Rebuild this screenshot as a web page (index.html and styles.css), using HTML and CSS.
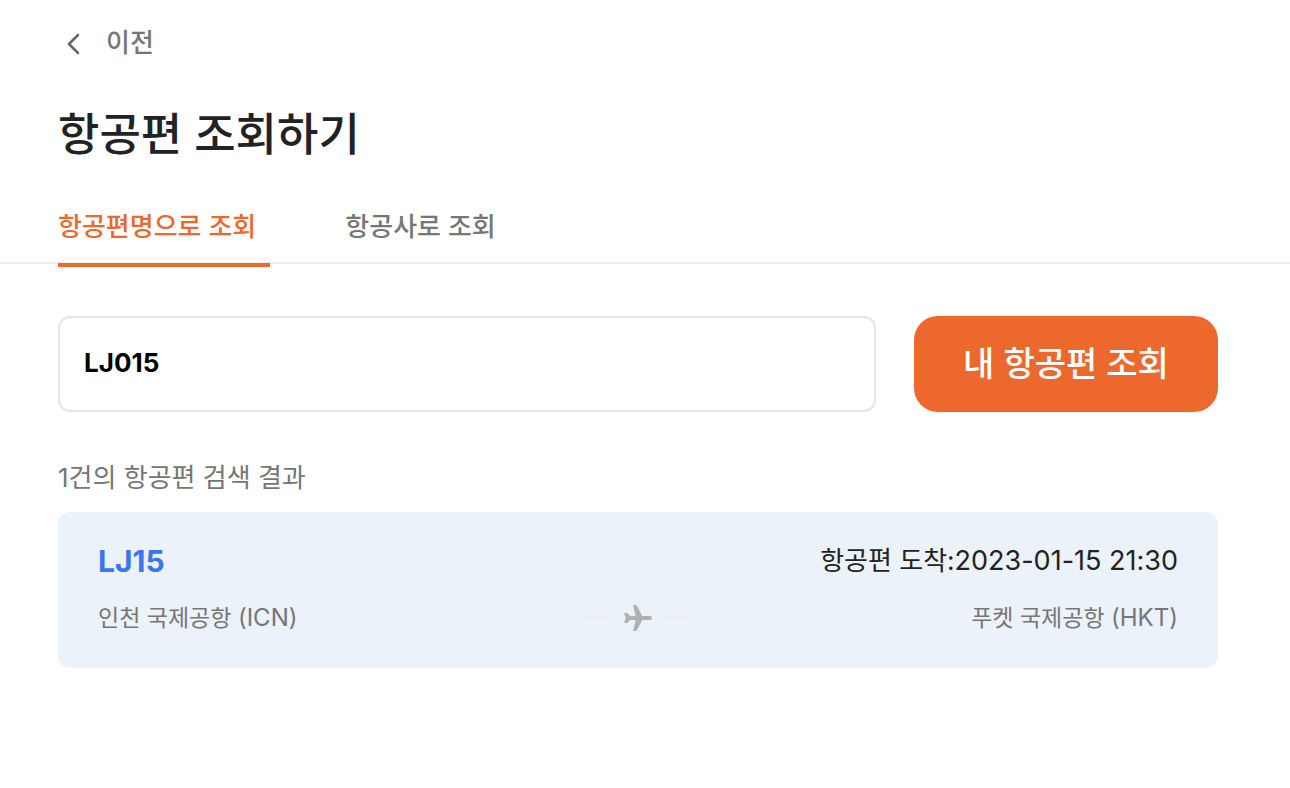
FILE: index.html
```html
<!DOCTYPE html>
<html lang="ko">
<head>
<meta charset="utf-8">
<meta name="viewport" content="width=device-width, initial-scale=1">
<title>항공편 조회하기</title>
<link rel="stylesheet" href="styles.css">
</head>
<body>
<header class="header">
  <a class="back" href="#">
    <svg class="back-icon" viewBox="0 0 32 32" aria-hidden="true"><path d="M20 8l-9 9 9 9"/></svg>
    <span>이전</span>
  </a>
  <h1 class="title">항공편 조회하기</h1>
</header>
<nav class="tabs">
  <a class="tab tab-active" href="#" aria-current="page">항공편명으로 조회</a>
  <a class="tab" href="#">항공사로 조회</a>
</nav>
<main class="content">
  <form class="search">
    <input class="search-input" type="text" value="LJ015" aria-label="항공편명">
    <button class="search-button" type="button">내 항공편 조회</button>
  </form>
  <p class="summary">1건의 항공편 검색 결과</p>
  <article class="flight">
    <div class="flight-top">
      <h2 class="flight-code">LJ15</h2>
      <p class="arrival">항공편 도착:<time class="arrival-time" datetime="2023-01-15T21:30">2023-01-15 21:30</time></p>
    </div>
    <div class="route">
      <span>인천 국제공항 <span class="airport-code">(ICN)</span></span>
      <div class="route-mark">
        <i class="route-line"></i>
        <svg class="plane" viewBox="0 0 28 26" aria-hidden="true"><path d="M9 0h2.600q1 0 1.500.9L18.200 11H26a2 2 0 0 1 0 4h-7.800L13.100 25.100q-.5.900-1.500.9H9l2.600-11H6l-2.500 3H0l1.700-5L0 8h3.500L6 11h5.600z"/></svg>
        <i class="route-line"></i>
      </div>
      <span class="route-to">푸켓 국제공항 <span class="airport-code">(HKT)</span></span>
    </div>
  </article>
</main>
</body>
</html>
```
FILE: styles.css
```css
* {
  box-sizing: border-box;
}

body {
  margin: 0;
  background: #fff;
  color: #222;
  font-family: Inter, "Noto Sans CJK KR", sans-serif;
}

h1, h2, p {
  margin: 0;
}

a {
  color: inherit;
  text-decoration: none;
}

.header {
  padding: 23px 72px 0 58px;
}

.back {
  display: inline-flex;
  align-items: center;
  gap: 16px;
  color: #767676;
  font-size: 26px;
  font-weight: 500;
  line-height: 40px;
}

.back-icon {
  width: 32px;
  height: 32px;
  fill: none;
  stroke: #666;
  stroke-width: 2.6;
  stroke-linecap: round;
  stroke-linejoin: round;
}

.title {
  margin-top: 36px;
  font-size: 45px;
  font-weight: 500;
  line-height: 72px;
}

.tabs {
  display: flex;
  gap: 75px;
  margin-top: 36px;
  padding: 0 58px;
  border-bottom: 2px solid #ededed;
}

.tab {
  margin-bottom: -5px;
  padding: 0 14px 16px 0;
  border-bottom: 4px solid transparent;
  color: #767676;
  font-size: 26px;
  font-weight: 500;
  line-height: 40px;
}

.tab-active {
  border-color: #ec682c;
  color: #ec682c;
}

.content {
  padding: 52px 72px 60px 58px;
}

.search {
  display: flex;
  gap: 38px;
}

.search-input {
  flex: 1;
  min-width: 0;
  height: 96px;
  padding: 0 24px 4px;
  border: 2px solid #e5e5e5;
  border-radius: 12px;
  background: #fff;
  color: #000;
  font: 700 26px Inter, "Noto Sans CJK KR", sans-serif;
}

.search-button {
  width: 304px;
  height: 96px;
  padding: 0 0 6px;
  border: 0;
  border-radius: 24px;
  background: #ec682c;
  color: #fff;
  font: 500 34px Inter, "Noto Sans CJK KR", sans-serif;
}

.summary {
  margin-top: 46px;
  color: #767676;
  font-size: 26px;
  line-height: 40px;
}

.flight {
  margin-top: 14px;
  padding: 26px 40px 30px;
  border-radius: 12px;
  background: #ebf2fa;
}

.flight-top {
  display: flex;
  justify-content: space-between;
  align-items: center;
  line-height: 46px;
}

.flight-code {
  color: #3b75f2;
  font-size: 30px;
  font-weight: 700;
}

.arrival {
  font-size: 26px;
}

.arrival-time {
  font-size: 27px;
}

.route {
  display: grid;
  grid-template-columns: 1fr auto 1fr;
  align-items: center;
  margin-top: 14px;
  color: #767676;
  font-size: 23px;
  line-height: 40px;
}

.airport-code {
  font-size: 24px;
}

.route-mark {
  display: flex;
  align-items: center;
  gap: 10px;
}

.route-line {
  width: 32px;
  height: 2px;
  background: #ececec;
}

.plane {
  width: 28px;
  height: 26px;
  fill: #b0b0b0;
}

.route-to {
  text-align: right;
}
```
